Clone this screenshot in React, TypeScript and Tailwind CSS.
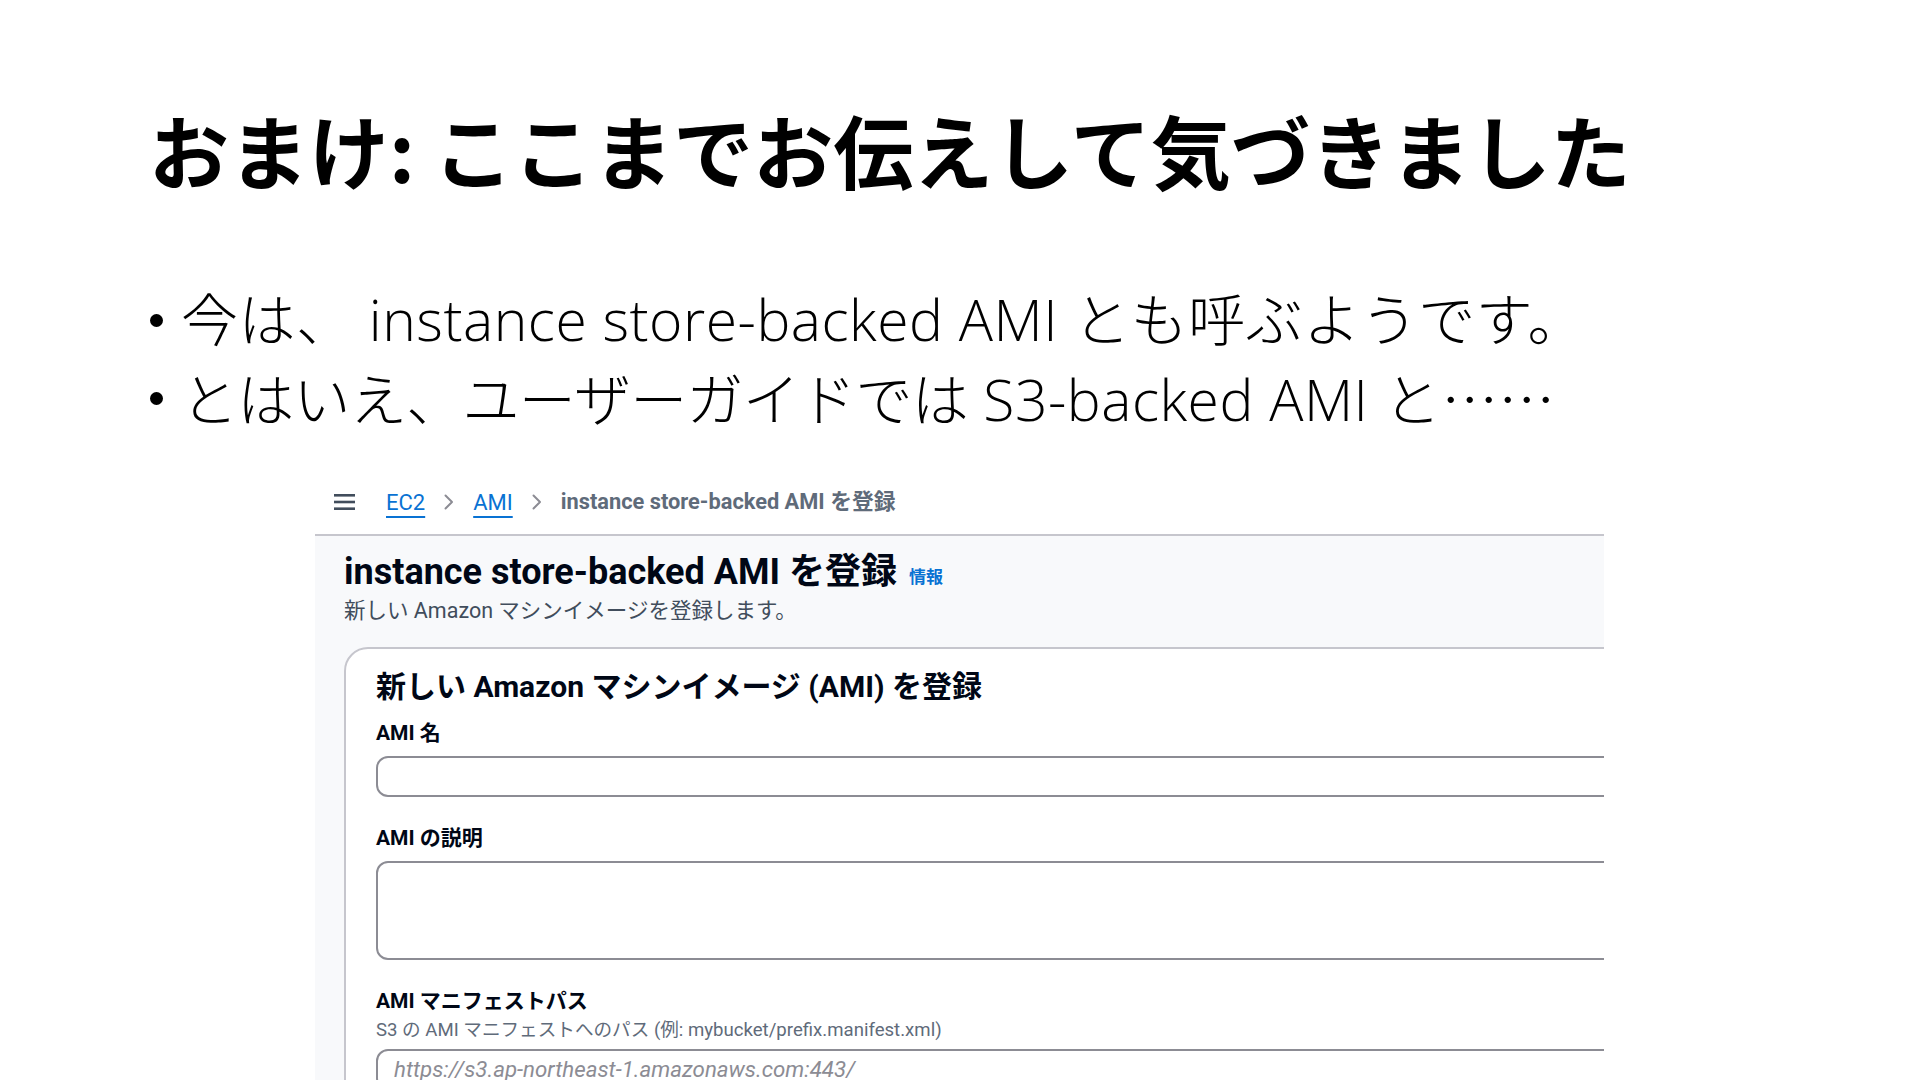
import React from 'react';

function Chevron() {
  return (
    <svg width="12" height="16" viewBox="0 0 12 16" className="shrink-0">
      <path d="M2.5 1.5 L9 8 L2.5 14.5" fill="none" stroke="#8c8c94" strokeWidth="2" strokeLinecap="round" strokeLinejoin="round" />
    </svg>
  );
}

function Bullet({ children }: { children: React.ReactNode }) {
  return (
    <li className="flex items-center h-[78px]">
      <span className="ml-px w-[13px] h-[13px] rounded-full bg-black shrink-0" />
      <span className="ml-[18px] whitespace-pre">{children}</span>
    </li>
  );
}

function ConsoleShot() {
  return (
    <div className="ml-[315px] mt-[33px] w-[1289px] h-[640px] overflow-hidden font-['Roboto','Noto_Sans_CJK_JP',sans-serif]">
      {/* breadcrumb */}
      <div className="h-[64px] flex items-center pl-[19px] bg-white text-[22px]">
        <svg width="21" height="16" viewBox="0 0 21 16" className="shrink-0">
          <rect x="0" y="0" width="21" height="2.6" fill="#414d5c" />
          <rect x="0" y="6.7" width="21" height="2.6" fill="#414d5c" />
          <rect x="0" y="13.4" width="21" height="2.6" fill="#414d5c" />
        </svg>
        <span className="ml-[31px] text-[#0972d3] underline underline-offset-[6px] decoration-[1.5px]">EC2</span>
        <span className="mx-[18px]"><Chevron /></span>
        <span className="text-[#0972d3] underline underline-offset-[6px] decoration-[1.5px]">AMI</span>
        <span className="mx-[18px]"><Chevron /></span>
        <span className="text-[#5f6b7a] font-bold text-[21.8px]">instance store-backed AMI を登録</span>
      </div>
      <div className="h-[2px] bg-[#c6c6cd]" />

      {/* page header + form */}
      <div className="bg-[#f8f9fb] pl-[29px] pt-[14px] h-[600px]">
        <div className="flex items-end">
          <h2 className="text-[36px] leading-[44px] font-bold text-[#000716]">instance store-backed AMI を登録</h2>
          <span className="ml-[12px] mb-[5px] text-[17px] leading-[24px] font-bold text-[#0972d3]">情報</span>
        </div>
        <p className="mt-[3px] text-[21.5px] leading-[28px] text-[#414d5c]">新しい Amazon マシンイメージを登録します。</p>

        <div className="mt-[22px] w-[1400px] bg-white border-2 border-[#c6c6cd] rounded-tl-[24px] pl-[30px] pt-[19px] pr-[40px] pb-[40px]">
          <h3 className="text-[30px] leading-[38px] font-bold text-[#000716]">新しい Amazon マシンイメージ (AMI) を登録</h3>

          <div className="mt-[14px] text-[21px] leading-[26px] font-bold text-[#000716]">AMI 名</div>
          <div className="mt-[10px] h-[41px] border-2 border-[#8c8c94] rounded-[12px]" />

          <div className="mt-[28px] text-[21px] leading-[26px] font-bold text-[#000716]">AMI の説明</div>
          <div className="mt-[10px] h-[99px] border-2 border-[#8c8c94] rounded-[12px]" />

          <div className="mt-[28px] text-[21px] leading-[26px] font-bold text-[#000716]">AMI マニフェストパス</div>
          <div className="mt-[4px] text-[18.6px] leading-[24px] text-[#5f6b7a]">S3 の AMI マニフェストへのパス (例: mybucket/prefix.manifest.xml)</div>
          <div className="mt-[7px] h-[41px] border-2 border-[#8c8c94] rounded-[12px] flex items-center pl-4">
            <span className="italic text-[22.3px] text-[#8c8c94]">https://s3.ap-northeast-1.amazonaws.com:443/</span>
          </div>
        </div>
      </div>
    </div>
  );
}

export default function App() {
  return (
    <div className="w-[1920px] h-[1080px] overflow-hidden bg-white">
      <div className="pl-[149px] pt-[108px]">
        <h1 className="font-['Noto_Sans_CJK_JP',sans-serif] text-[80px] font-bold leading-none text-black whitespace-nowrap">
          おまけ: ここまでお伝えして気づきました
        </h1>
        <ul lang="ja" className="mt-[93px] font-['Open_Sans','Noto_Sans_CJK_JP',sans-serif] font-light text-[57px] tracking-[0.5px] text-black">
          <Bullet>今は、 instance store-backed AMI とも呼ぶようです。</Bullet>
          <Bullet>
            <span className="tracking-[-0.7px]">とはいえ、ユーザーガイドでは</span> S3-backed AMI と
            <span className="font-['Noto_Sans_CJK_JP',sans-serif] tracking-normal">……</span>
          </Bullet>
        </ul>
      </div>
      <ConsoleShot />
    </div>
  );
}
